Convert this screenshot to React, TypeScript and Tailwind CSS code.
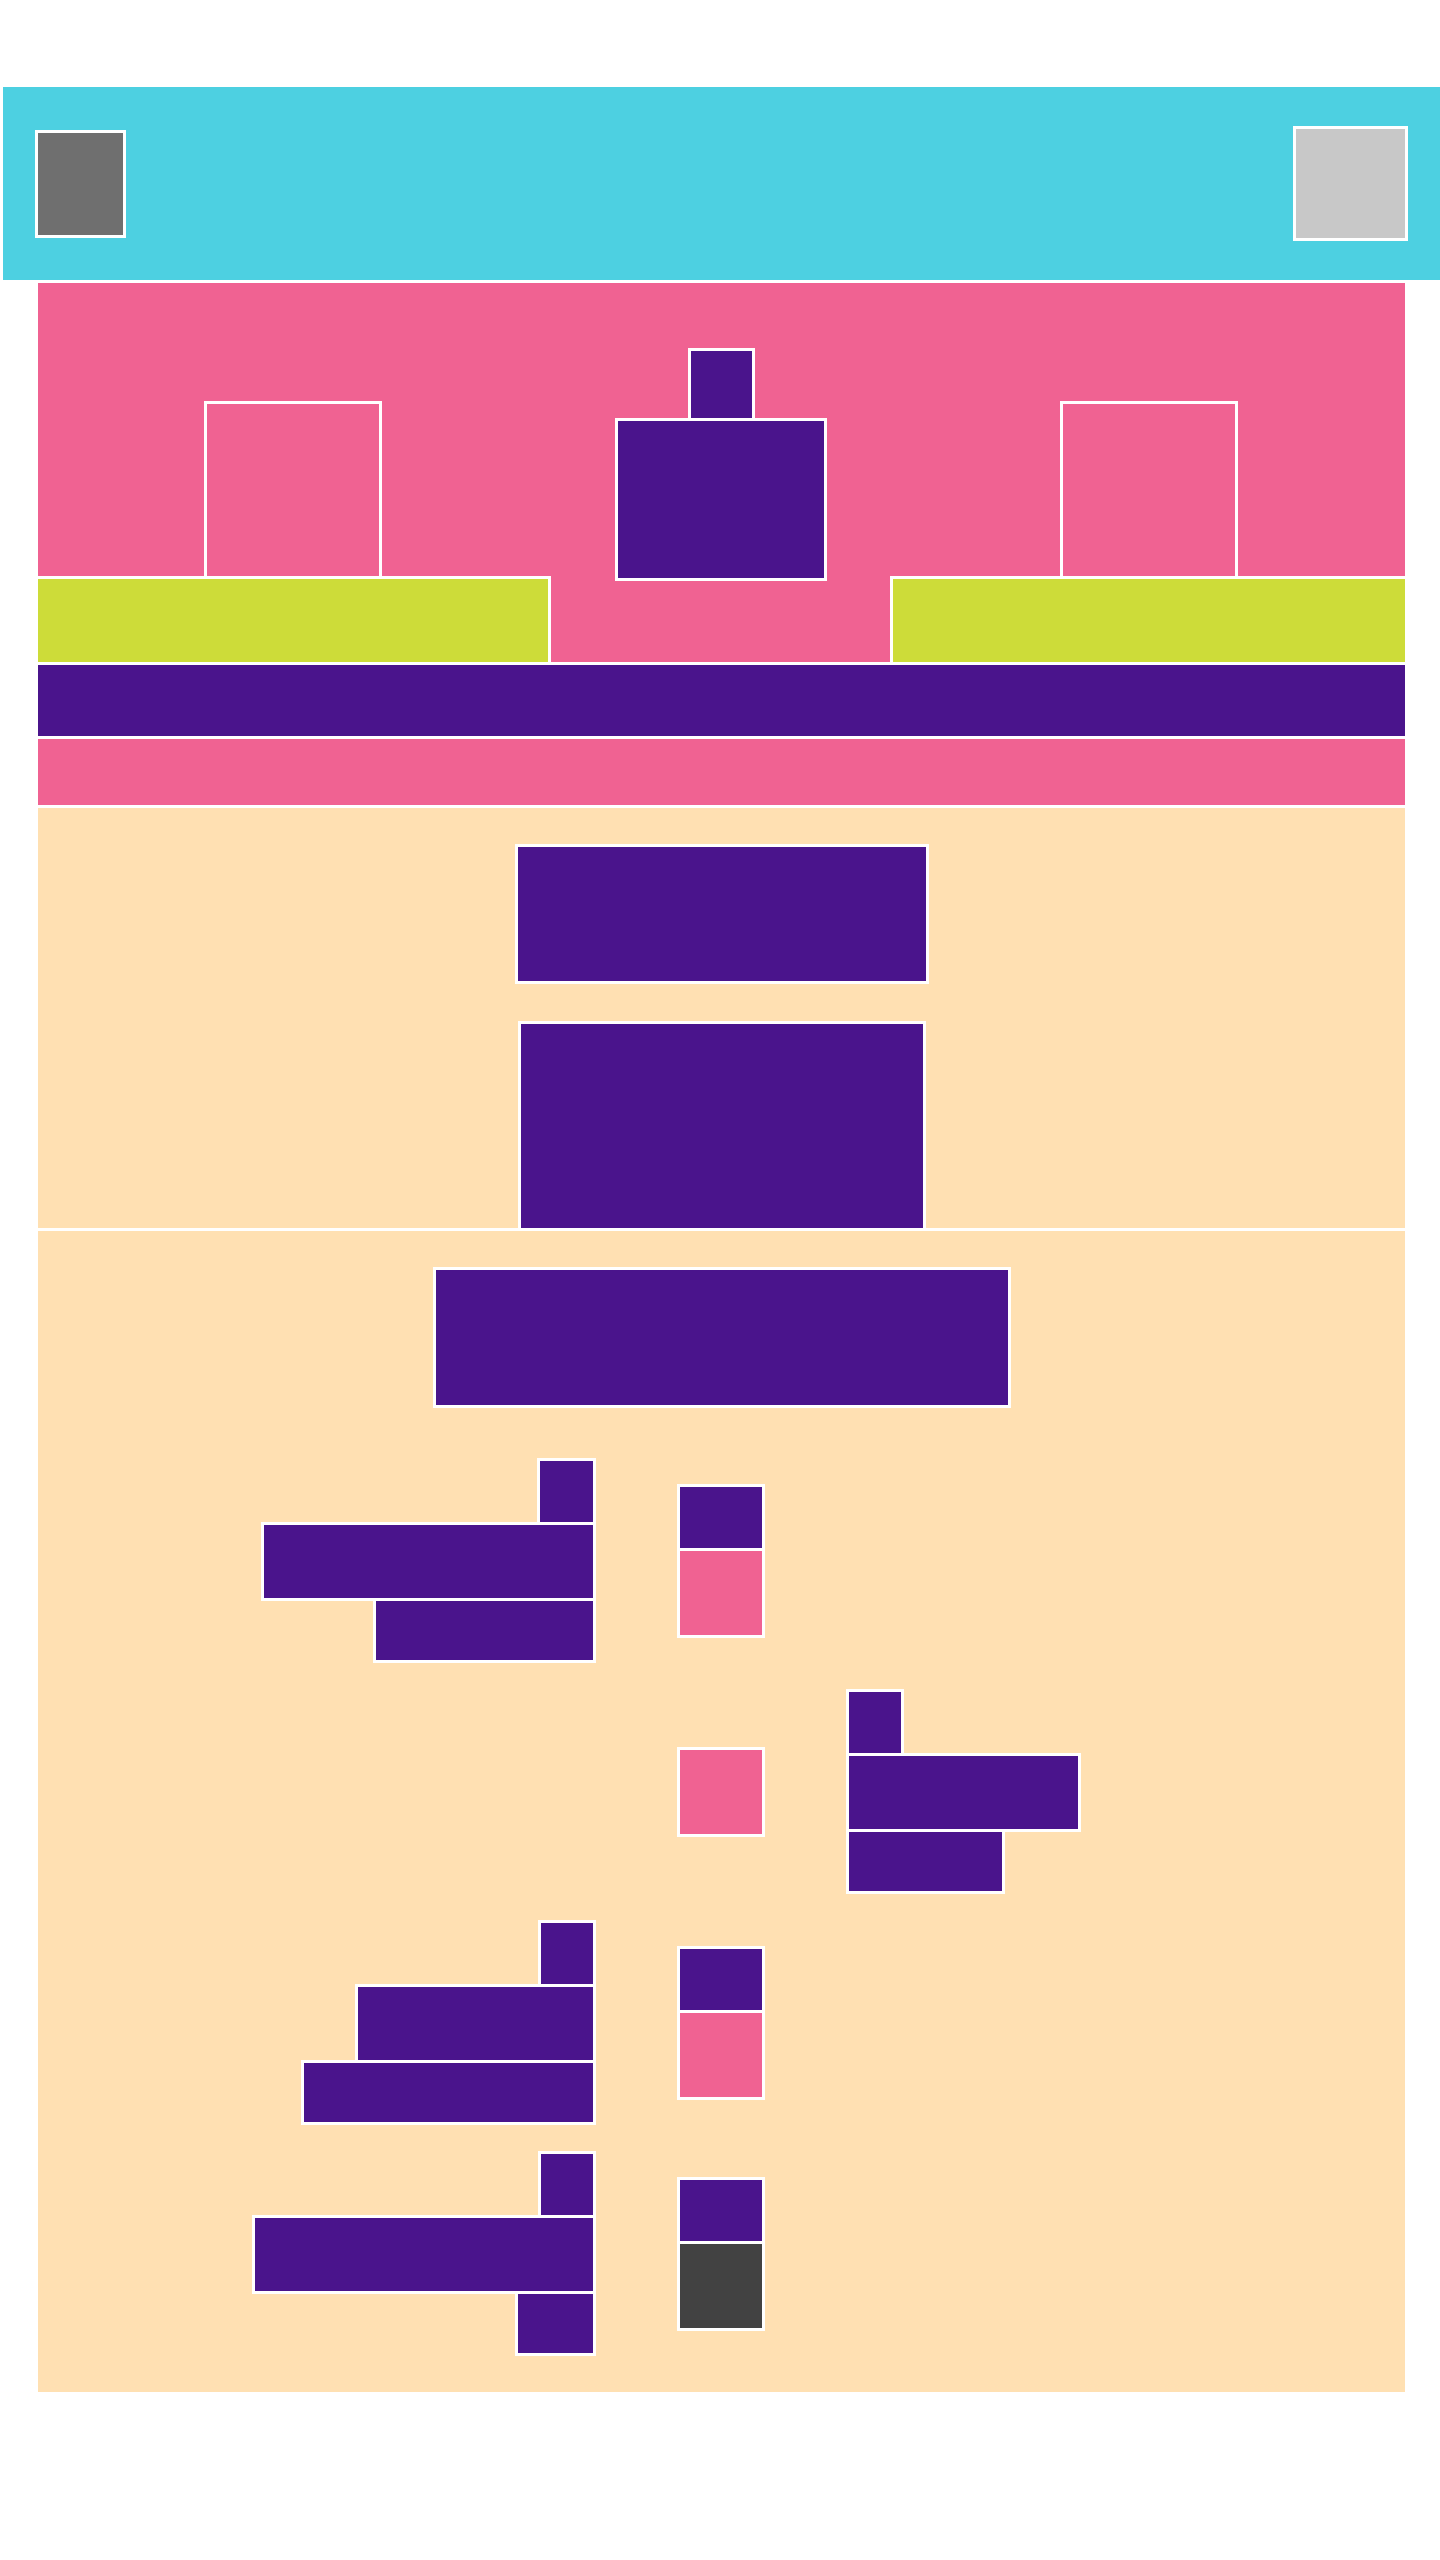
type Piece = { cls: string };

const PURPLE = "bg-[#4a148c]";

// stacked blocks share one white edge, so every block after the first slides up 3px
function Stack({ pieces, align }: { pieces: string[]; align: "start" | "end" | "center" }) {
  const alignCls = align === "end" ? "items-end" : align === "start" ? "items-start" : "items-center";
  return (
    <div className={`flex flex-col ${alignCls}`}>
      {pieces.map((cls, i) => (
        <div key={i} className={`border-[3px] border-white ${i > 0 ? "-mt-[3px]" : ""} ${cls}`} />
      ))}
    </div>
  );
}

const timeline: { left?: string[]; center: string[]; right?: string[] }[] = [
  {
    left: [`w-[59px] h-[67px] ${PURPLE}`, `w-[335px] h-[79px] ${PURPLE}`, `w-[223px] h-[65px] ${PURPLE}`],
    center: [`w-[88px] h-[67px] ${PURPLE}`, "w-[88px] h-[90px] bg-[#f06292]"],
  },
  {
    center: ["w-[88px] h-[90px] bg-[#f06292]"],
    right: [`w-[58px] h-[67px] ${PURPLE}`, `w-[235px] h-[79px] ${PURPLE}`, `w-[159px] h-[65px] ${PURPLE}`],
  },
  {
    left: [`w-[58px] h-[67px] ${PURPLE}`, `w-[241px] h-[79px] ${PURPLE}`, `w-[295px] h-[65px] ${PURPLE}`],
    center: [`w-[88px] h-[67px] ${PURPLE}`, "w-[88px] h-[90px] bg-[#f06292]"],
  },
  {
    left: [`w-[58px] h-[67px] ${PURPLE}`, `w-[344px] h-[79px] ${PURPLE}`, `w-[81px] h-[65px] ${PURPLE}`],
    center: [`w-[88px] h-[67px] ${PURPLE}`, "w-[88px] h-[90px] bg-[#424242]"],
  },
];

export default function App() {
  return (
    <div className="w-[1440px] min-h-[2560px] bg-white pt-[87px]">
      {/* top bar */}
      <header className="ml-[3px] h-[193px] bg-[#4dd0e1] flex items-center justify-between px-[32px]">
        <div className="w-[91px] h-[108px] border-[3px] border-white bg-[#6f6f6f]" />
        <div className="w-[115px] h-[115px] border-[3px] border-white bg-[#c8c8c8]" />
      </header>

      <main className="ml-[38px] w-[1367px] mt-[3px]">
        {/* cover */}
        <section className="h-[293px] bg-[#f06292] flex items-end justify-between pl-[166px] pr-[167px]">
          <div className="w-[178px] h-[175px] border-[3px] border-b-0 border-white" />
          <div className="flex flex-col items-center -mb-[5px] relative z-10">
            <div className={`w-[67px] h-[78px] border-[3px] border-white ${PURPLE}`} />
            <div className={`w-[212px] h-[163px] -mt-[8px] border-[3px] border-white ${PURPLE}`} />
          </div>
          <div className="w-[178px] h-[175px] border-[3px] border-b-0 border-white" />
        </section>

        <div className="h-[86px] bg-[#f06292] flex justify-between">
          <div className="w-[513px] h-full border-t-[3px] border-r-[3px] border-white bg-[#cddc39]" />
          <div className="w-[515px] h-full border-t-[3px] border-l-[3px] border-white bg-[#cddc39]" />
        </div>

        <div className={`h-[74px] border-t-[3px] border-white ${PURPLE}`} />
        <div className="h-[69px] border-t-[3px] border-white bg-[#f06292]" />

        {/* intro */}
        <section className="h-[423px] border-t-[3px] border-white bg-[#ffe0b2] flex flex-col items-center pt-[36px]">
          <div className={`w-[414px] h-[140px] border-[3px] border-white ${PURPLE}`} />
          <div className={`w-[408px] h-[207px] mt-[37px] border-[3px] border-b-0 border-white ${PURPLE}`} />
        </section>

        {/* timeline */}
        <section className="border-t-[3px] border-white bg-[#ffe0b2] pt-[36px] pb-[36px]">
          <div className="flex justify-center">
            <div className={`w-[578px] h-[141px] border-[3px] border-white ${PURPLE}`} />
          </div>
          <div className="mt-[50px] grid grid-cols-[558px_88px_1fr] gap-x-[81px] gap-y-[26px] items-center">
            {timeline.map((row, i) => (
              <div key={i} className="contents">
                <div className="h-[205px] flex flex-col justify-center">
                  {row.left && <Stack pieces={row.left} align="end" />}
                </div>
                <div className="flex flex-col justify-center">
                  <Stack pieces={row.center} align="center" />
                </div>
                <div className="h-[205px] flex flex-col justify-center">
                  {row.right && <Stack pieces={row.right} align="start" />}
                </div>
              </div>
            ))}
          </div>
        </section>
      </main>
    </div>
  );
}
